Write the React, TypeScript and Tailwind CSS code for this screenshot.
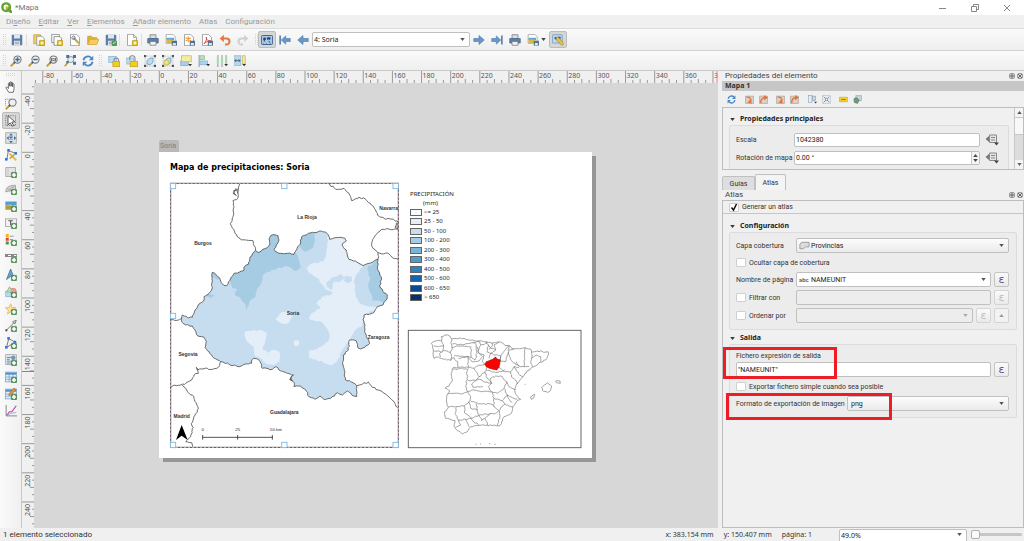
import React, { useState } from 'react';
import type { ReactNode } from 'react';

type Pt = [number, number];

/* ---------- geometry helpers ---------- */

const parse = (s: string): Pt[] =>
  s.trim().split(/\s+/).map((p) => p.split(',').map(Number) as Pt);

const noise = (n: number) => {
  const v = Math.sin(n * 127.1 + 11.7) * 43758.5453;
  return (v - Math.floor(v)) * 2 - 1;
};

/** Turns a coarse polyline into a slightly ragged border. */
function border(s: string, amp = 2.2, step = 6, close = false): string {
  const pts = parse(s);
  if (close) pts.push(pts[0]);
  const out: Pt[] = [pts[0]];
  for (let i = 1; i < pts.length; i++) {
    const [ax, ay] = pts[i - 1];
    const [bx, by] = pts[i];
    const len = Math.hypot(bx - ax, by - ay);
    const n = Math.max(1, Math.round(len / step));
    for (let k = 1; k <= n; k++) {
      const t = k / n;
      const x = ax + (bx - ax) * t;
      const y = ay + (by - ay) * t;
      const a = k === n ? 0 : amp;
      out.push([x + noise(x * 3 + y) * a, y + noise(y * 5 - x) * a]);
    }
  }
  return 'M' + out.map(([x, y]) => x.toFixed(1) + ' ' + y.toFixed(1)).join('L') + (close ? 'Z' : '');
}

/* ---------- icons ---------- */

const floppy = (
  <>
    <path d="M1 1h13l1 1v13H1z" fill="#5b7ea8" />
    <path d="M4 1h8v5H4z" fill="#dfe6ee" />
    <path d="M4 9h8v6H4z" fill="#e9e9e9" />
    <path d="M5 11h6M5 13h6" stroke="#8a8a8a" />
  </>
);
const sheetShape = <path d="M2 .5h8l4 4v11H2z" fill="#fff" stroke="#8b8b8b" />;
const star = (
  <g>
    <rect x="8.5" y="8.5" width="7" height="7" rx="1" fill="#e7c21c" stroke="#b8940a" />
    <path d="M12 10v4M10 12h4" stroke="#fff" strokeWidth="1.4" />
  </g>
);
const plus = (
  <g>
    <rect x="8.5" y="8.5" width="7" height="7" rx="1" fill="#5d9a62" stroke="#4a8450" />
    <path d="M12 9.4v5.200M9.400 12h5.200" stroke="#fff" strokeWidth="2" />
  </g>
);
const glass = (
  <>
    <circle cx="10" cy="6" r="4.8" fill="#eef1f4" stroke="#777" strokeWidth="1.4" />
    <path d="M6.4 9.6L1 15" stroke="#c7a21c" strokeWidth="2.6" />
    <path d="M6.8 9.2L5 11" stroke="#555" strokeWidth="2" />
  </>
);
const printerShape = (
  <>
    <path d="M4 1h8v5H4z" fill="#d9dde2" stroke="#777" />
    <path d="M1 6h14v6H1z" fill="#5c7fa6" stroke="#48678a" />
    <path d="M4 10h8v5H4z" fill="#f2f2f2" stroke="#777" />
  </>
);
const smallDisk = (
  <g>
    <rect x="9" y="9" width="7" height="6.5" fill="#53728f" />
    <rect x="10.5" y="12" width="4" height="3" fill="#dfe6ee" />
  </g>
);
const arrowBlue = (d: string) => <path d={d} fill="#6a96c8" stroke="#4a78aa" strokeWidth=".8" />;
const drop = <path d="M11 12h5l-2.500 3z" fill="#333" />;
const nodeRects = (
  <>
    <path d="M4 12V7l4-3 4 0v6l-4 3z" fill="#bcdcf0" stroke="#5a9bc4" />
    <g fill="#555">
      <rect x="0" y="0" width="3" height="3" /><rect x="13" y="0" width="3" height="3" />
      <rect x="0" y="13" width="3" height="3" /><rect x="13" y="13" width="3" height="3" />
    </g>
    <path d="M4 1.500h8M4 14.500h8M1.500 4v8M14.500 4v8" stroke="#999" strokeWidth=".8" strokeDasharray="1.500 1.500" />
  </>
);
const refreshShape = (
  <>
    <path d="M2 7a6 6 0 0 1 10.500-3" fill="none" stroke="#4b86c6" strokeWidth="2.4" />
    <path d="M15 1v6H9z" fill="#4b86c6" />
    <path d="M14 9a6 6 0 0 1-10.500 3" fill="none" stroke="#4b86c6" strokeWidth="2.4" />
    <path d="M1 15V9h6z" fill="#4b86c6" />
  </>
);
const curl = (flip: boolean, bg: string) => (
  <>
    <path d="M1 2h14v13H1z" fill="#d8d2ca" stroke="#9b948b" />
    <path d={bg} fill="none" stroke="#e8743b" strokeWidth="2.600" />
    <path d={flip ? 'M9 0l7 4.500-7 5z' : 'M12 15L4 13.500l7-7z'} fill="#e8743b" />
  </>
);

const ICONS: Record<string, ReactNode> = {
  save: floppy,
  newLayout: <><path d="M1 1h9v12H1z" fill="#f0cf63" stroke="#c19f2c" /><path d="M5 3h7l3 3v9H5z" fill="#fff" stroke="#888" />{star}</>,
  duplicate: <><path d="M1 .5h10v11H1z" fill="#fff" stroke="#777" /><path d="M4 3.500h8l2 2V15H4z" fill="#fff" stroke="#777" />{star}</>,
  manager: <>{sheetShape}<path d="M6 5l8 8" stroke="#9a9a9a" strokeWidth="2.400" /><path d="M9 9l5 5" stroke="#e0bd3a" strokeWidth="2.200" /><circle cx="6" cy="5" r="2.200" fill="none" stroke="#777" strokeWidth="1.300" /></>,
  open: <><path d="M1 14V3h5l1.500 2H13v2" fill="#e3b433" stroke="#c2952a" /><path d="M1 14L4 7h12l-3 7z" fill="#f7cd55" stroke="#cfa23a" /></>,
  saveTemplate: <>{floppy}<rect x="9" y="9" width="7" height="7" rx="1" fill="#4d9a55" /><path d="M10.500 13l4-2.500" stroke="#fff" /></>,
  addPage: <>{sheetShape}<path d="M10 .5v4h4" fill="none" stroke="#8b8b8b" />{star}</>,
  print: printerShape,
  exportImage: <><path d="M1.500.5h9l3 3v9h-12z" fill="#fff" stroke="#999" /><path d="M2 5h10v3H2z" fill="#61a9d8" /><path d="M2 8l4-1 6 2v3H2z" fill="#d9b944" />{smallDisk}</>,
  exportSvg: <>{sheetShape}<path d="M7 3v8M3.500 5l7 4M10.500 5l-7 4" stroke="#f0993a" strokeWidth="1.500" />{smallDisk}</>,
  exportPdf: <>{sheetShape}<path d="M4 13c3-3 4-7 3-9 0 4 3 6 6 5-3 0-6 1-9 4z" fill="none" stroke="#d2462f" strokeWidth="1.200" />{smallDisk}</>,
  undo: <><path d="M4 6h6a3.500 3.500 0 0 1 0 8H8" fill="none" stroke="#e27a43" strokeWidth="2.800" /><path d="M6.500 1v10L1 6z" fill="#e27a43" /></>,
  redo: <><path d="M12 6H6a3.500 3.500 0 0 0 0 8h2" fill="none" stroke="#d0d0d0" strokeWidth="2.800" /><path d="M9.500 1v10L15 6z" fill="#d0d0d0" /></>,
  atlas: <><rect x=".5" y="2" width="15" height="12" rx="1.500" fill="#a9c8e6" stroke="#315a88" strokeWidth="1.200" /><path d="M3 5l3-.5 1 2-2 2 .5 2.500L3 8zM8 5l2-1 3 1-1 3-2-1-2 1zM10 9l2 1-1 2z" fill="#23486f" /><path d="M3 12.500h1M7 12.500h1M12 12.500h1" stroke="#315a88" /></>,
  first: <><path d="M1.500 2v12" stroke="#4775a6" strokeWidth="2" />{arrowBlue('M3 8l6-5.500V6h6v4H9v3.500z')}</>,
  prev: arrowBlue('M1 8l7-6v4h7v4H8v4z'),
  next: arrowBlue('M15 8L8 2v4H1v4h7v4z'),
  last: <><path d="M14.500 2v12" stroke="#4775a6" strokeWidth="2" />{arrowBlue('M13 8L7 2.500V6H1v4h6v3.500z')}</>,
  atlasSettings: <><rect x=".5" y="1" width="13" height="11" rx="1" fill="#c4d9ea" stroke="#6a94b8" /><path d="M3 4l3 0 0 2-2 2zM8 3l4 1-1 3-2-1z" fill="#3f6a93" /><path d="M6 4l3 1 7 8-2.500 2.500L6 8z" fill="#e3c449" stroke="#8f7b28" strokeWidth=".8" /></>,
  zoomIn: <>{glass}<path d="M10 3v6M7 6h6" stroke="#2f6cae" strokeWidth="2" /></>,
  zoomOut: <>{glass}<path d="M7 6h6" stroke="#2f6cae" strokeWidth="2" /></>,
  zoomActual: <>{glass}<path d="M7.800 4v4.500M12.200 4v4.500" stroke="#333" strokeWidth="1.400" /><path d="M10 4.500v1M10 7v1" stroke="#333" strokeWidth="1.200" /></>,
  zoomFull: <><circle cx="9" cy="6" r="4" fill="#e4edf4" stroke="#777" /><path d="M6 9l-5 6" stroke="#c7a21c" strokeWidth="2.400" /><path d="M3 0h4v4H3zM12 0h4v4h-4zM12 9h4v4h-4zM3 8h3v3H3z" fill="#3f75ad" /></>,
  refresh: refreshShape,
  lock: <><rect x="1" y="2" width="10" height="8" fill="#bcdcf0" stroke="#8bb3d0" /><path d="M8 9V7a3 3 0 0 1 6 0v2" fill="none" stroke="#888" strokeWidth="1.400" /><rect x="6.500" y="8.500" width="9" height="7" fill="#f2cd22" stroke="#c9a40d" /></>,
  unlock: <><rect x="1" y="4" width="9" height="8" fill="#bcdcf0" stroke="#8bb3d0" /><path d="M5 7V5a3.500 3.500 0 0 1 7-1v4" fill="none" stroke="#888" strokeWidth="1.400" /><rect x="5.500" y="8.500" width="10" height="7" fill="#f2cd22" stroke="#c9a40d" /></>,
  group: nodeRects,
  ungroup: <>{nodeRects}<circle cx="6" cy="10" r="3.500" fill="#efe27a" stroke="#c1b03f" /></>,
  raise: <><rect x="1" y="8" width="10" height="6" fill="#a6cfec" stroke="#7aa8c9" /><rect x="2" y="1" width="13" height="8" fill="#f4eda0" stroke="#c4b961" />{drop}</>,
  align: <><path d="M1.500 0v16" stroke="#777" /><rect x="2.500" y="1" width="6" height="5" fill="#b9e2bb" stroke="#8dbf90" /><rect x="2.500" y="8" width="10" height="5" fill="#a8d4ef" stroke="#7fb0d0" />{drop}</>,
  distribute: <><path d="M2.500 0v16M8 0v16M13.500 0v12" stroke="#777" /><rect x="1" y="3" width="3" height="7" fill="#a7dcae" /><rect x="6.500" y="5" width="3" height="7" fill="#a7dcae" /><rect x="12" y="2" width="3" height="8" fill="#a7dcae" />{drop}</>,
  resize: <><rect x="0" y="1" width="9" height="13" fill="#b5d9f1" stroke="#8bb8d6" /><path d="M1 7.500h7M3 5.500l-2 2 2 2M6 5.500l2 2-2 2" stroke="#444" fill="none" /><rect x="11" y="1" width="4" height="11" fill="#f1e9a0" stroke="#c4b961" />{drop}</>,
  hand: <path d="M5 15L1.500 9.500C.8 8 2.300 7.500 3 8.500L4.500 10V3.500c0-1.300 1.800-1.300 1.800 0V7 2c0-1.300 1.900-1.300 1.900 0v5-4.400c0-1.300 1.900-1.300 1.900 0V7.500 4.500c0-1.200 1.900-1.200 1.900 0V10c0 2-.5 3-1 5z" fill="#fff" stroke="#444" />,
  zoomTool: <><path d="M.5 1.500h8M.5 1.500v9" stroke="#777" strokeDasharray="1.500 1" />{glass}</>,
  select: <><rect x="1" y="1" width="13" height="13" fill="#d9d9d9" stroke="#555" strokeDasharray="1.500 1.500" /><path d="M4 1l9 8-4 .5 2.500 4.500-2 1L7 10.500 4 13z" fill="#fff" stroke="#333" /></>,
  moveContent: <><rect x="1" y="1" width="14" height="14" fill="#dfe3e6" stroke="#999" /><path d="M8 1.500l2.500 3h-5zM8 15l2.500-3h-5zM2 8l3-2.500v5zM15 8l-3-2.500v5z" fill="#3c6c9c" /><path d="M6 6l4 4M10 6l-4 4" stroke="#3c6c9c" strokeWidth="1.600" /></>,
  editNodes: <><path d="M2.500 14L4.500 2l10 4" fill="none" stroke="#555" /><path d="M15 15L6 6" stroke="#e8bb3a" strokeWidth="2.600" /><path d="M6 13l7-6" stroke="#d09a2a" strokeWidth="1.800" /><g fill="#2f7be0"><rect x="3" y="0" width="3.500" height="3.500" /><rect x="12.500" y="4" width="3.500" height="3.500" /><rect x="0" y="12" width="3.500" height="3.500" /></g></>,
  addMap: <><path d="M1 2h13v12H1z" fill="#e4e4e4" stroke="#999" /><path d="M4 2v12" stroke="#bbb" />{plus}</>,
  add3d: <><path d="M1 12c0-6 4-9 13-9v9c-4-2-8-2-13 0z" fill="#d0d0d0" stroke="#999" /><path d="M5 11c1-4 4-6 9-6M3 8l9 2" stroke="#aaa" fill="none" />{plus}</>,
  addPicture: <><rect x=".5" y="2" width="15" height="5" fill="#4f9fd6" /><path d="M.5 7h15v6H.5z" fill="#b39a3e" /><path d="M.5 7l7-1 8 3V7z" fill="#e6d27c" />{plus}</>,
  addLabel: <><rect x=".5" y="2.500" width="15" height="10" fill="#f2f2f2" stroke="#999" /><path d="M4.500 5h6M7.500 5v6" stroke="#555" strokeWidth="1.400" />{plus}</>,
  addLegend: <><rect x="1" y="0" width="4" height="4" fill="#f2b52a" /><rect x="1" y="5" width="4" height="4" fill="#dc4a2a" /><rect x="1" y="10" width="4" height="4" fill="#3e9b4a" /><path d="M6.500 3h5M6.500 7.500h4M6.500 12h2" stroke="#999" strokeWidth="1.400" />{plus}</>,
  addScale: <><rect x="0" y="4" width="16" height="4" fill="#888" /><path d="M4 6h4M12 6h3" stroke="#fff" strokeWidth="1.500" />{plus}</>,
  addNorth: <><path d="M7.500 0L13 14l-5.500-4L2 14z" fill="#6aa0d0" stroke="#3f6d98" />{plus}</>,
  addShape: <><rect x="1" y="7" width="9" height="7" fill="#b8daf0" stroke="#86b2d1" /><circle cx="11" cy="7" r="4" fill="#f0a0a0" stroke="#cf7070" /><path d="M6 1l4 7H2z" fill="#b7e3b5" stroke="#7cb97a" />{plus}</>,
  addMarker: <><path d="M7.500 1l2 5 5 .3-4 3.400 1.300 5-4.300-2.900-4.300 2.900 1.300-5-4-3.400 5-.3z" fill="#fbe39a" stroke="#e2b34c" />{plus}</>,
  addArrow: <><path d="M1.500 14L13 2.500" stroke="#555" /><circle cx="1.800" cy="13.800" r="1.500" fill="#444" /><path d="M10 2.500L15 0l-1.500 5z" fill="#ddd" stroke="#666" />{plus}</>,
  addNode: <><path d="M2 14L5 2l8.500 5z" fill="#f0f0f0" stroke="#555" /><g fill="#2f7be0"><rect x="3" y="0" width="3.500" height="3.500" /><rect x="11.500" y="5" width="3.500" height="3.500" /><rect x="0" y="12" width="3.500" height="3.500" /></g>{plus}</>,
  addHtml: <><rect x="1" y="1" width="14" height="13" fill="#eaf0f5" stroke="#8b9aa8" /><path d="M2.500 4.500h6M2.500 7h4M2.500 9.500h5M2.500 12h5" stroke="#5f87ae" strokeWidth="1.300" /><circle cx="11" cy="5" r="3" fill="#7a93ab" />{plus}</>,
  addTable: <><rect x=".5" y="1.500" width="15" height="13" fill="#e3effa" stroke="#7aa2c8" /><path d="M1 2h14v3H1z" fill="#5b8fc4" /><path d="M1 8h14M1 11h14M5.500 5v9M10.500 5v9" stroke="#7aa2c8" />{plus}</>,
  addAttr: <><rect x=".5" y="1.500" width="15" height="13" fill="#e3effa" stroke="#7aa2c8" /><path d="M1 2h14v3H1z" fill="#5b8fc4" /><path d="M1 8h14M1 11h14" stroke="#7aa2c8" /><path d="M5 10l1-3 6-7 2.500 2-6 7z" fill="#e39a3c" stroke="#8a5a20" strokeWidth=".7" />{plus}</>,
  addPlot: <><path d="M1.500 0v14.500H16" stroke="#666" fill="none" /><path d="M2 14L6 9h3l6-8" stroke="#c03ba6" strokeWidth="1.500" fill="none" /><path d="M2 14l6-3 7-1" stroke="#7aa2d8" fill="none" /></>,
  curl1: curl(false, 'M3 4c5-1 8 2 7 7'),
  curl2: curl(true, 'M3 14c0-6 3-9 8-9.500'),
  bookmark: <><rect x="1" y="1" width="6" height="12" fill="#e8eef3" stroke="#8a9aa8" /><rect x="8" y="2" width="5" height="8" fill="#c9d8e4" stroke="#7f95a8" />{drop}</>,
  extent: <><rect x="1" y="1" width="14" height="14" fill="#e9edf0" stroke="#999" strokeDasharray="2 1" /><path d="M3 3l10 10M13 3L3 13" stroke="#6b8fb2" strokeWidth="1.600" /><circle cx="8" cy="8" r="2" fill="#fff" stroke="#3c6c9c" /></>,
  labels: <><rect x="0" y="4" width="16" height="8" rx="2" fill="#f2cf2a" stroke="#c7a41a" /><path d="M4 8h8" stroke="#665" strokeWidth="1.400" /></>,
  clip: <><path d="M5 1h10v9H5z" fill="#c5d5dc" stroke="#8b9ea8" /><path d="M2 6l5-1 4 4-3 6-6-2z" fill="#6f9c7c" stroke="#4b6f57" /></>,
};

const Glyph = ({ name, className = 'h-3 w-3' }: { name: string; className?: string }) => (
  <svg viewBox="0 0 16 16" className={className} aria-hidden="true">{ICONS[name]}</svg>
);

function ToolButton({ name, label, active = false }: { name: string; label: string; active?: boolean }) {
  return (
    <button
      type="button"
      aria-label={label}
      className={
        'flex h-[17px] w-[18px] shrink-0 items-center justify-center rounded-xs ' +
        (active ? 'border border-[#bcbcbc] bg-[#d6d6d6]' : '')
      }
    >
      <Glyph name={name} className="h-3 w-3 shrink-0" />
    </button>
  );
}

const Tools = ({ items, className }: { items: [string, string, boolean?][]; className: string }) => (
  <div className={'flex shrink-0 items-center justify-between ' + className}>
    {items.map(([name, label, active]) => (
      <ToolButton key={label} name={name} label={label} active={active} />
    ))}
  </div>
);

const Handle = ({ className = '' }: { className?: string }) => (
  <span className={'h-[11px] w-[3px] shrink-0 border-x border-dotted border-[#d4d4d4] ' + className} />
);
const Sep = ({ className = '' }: { className?: string }) => (
  <span className={'h-[12px] w-px shrink-0 bg-[#dedede] ' + className} />
);

const Caret = ({ className = 'text-[#666]', up = false }: { className?: string; up?: boolean }) => (
  <svg viewBox="0 0 6 4" className={'h-[3px] w-[5px] shrink-0 ' + className} aria-hidden="true">
    <path d={up ? 'M0 4h6L3 0z' : 'M0 0h6L3 4z'} fill="currentColor" />
  </svg>
);

/* ---------- rulers ---------- */

const STEP = 29.14;
const range = (from: number, to: number) => Array.from({ length: to - from + 1 }, (_, i) => from + i);
const minor = [1, 2, 3];

function TopRuler() {
  return (
    <div className="relative h-3 min-w-0 flex-1 overflow-hidden bg-[#f0f0f0]">
      <svg className="absolute inset-0 h-full w-full text-[7px]" aria-label="Regla horizontal">
        {range(-5, 19).map((t) => {
          const x = 125.3 + t * STEP;
          return (
            <g key={t} stroke="#999">
              <path d={`M${x} 0v12`} />
              {minor.map((m) => <path key={m} d={`M${x + (STEP * m) / 4} ${m === 2 ? 8 : 9}v4`} />)}
              {t > -5 && <text x={x + 1} y="7" fill="#555" stroke="none">{t === 19 ? '3' : t * 20}</text>}
            </g>
          );
        })}
        <path d="M683 0v12" stroke="#e88" />
      </svg>
    </div>
  );
}

function SideRuler() {
  return (
    <div className="relative w-[13px] shrink-0 overflow-hidden border-l border-[#c9c9c9] bg-[#f0f0f0]">
      <svg className="absolute inset-0 h-full w-full text-[7px]" aria-label="Regla vertical">
        {range(-3, 12).map((t) => {
          const y = 69.3 + t * STEP;
          return (
            <g key={t} stroke="#999">
              <path d={`M0 ${y}h13`} />
              {minor.map((m) => <path key={m} d={`M${m === 2 ? 8 : 10} ${y + (STEP * m) / 4}h5`} />)}
              {t > -3 && (
                <text transform={`translate(8 ${y + 2}) rotate(-90)`} textAnchor="end" fill="#555" stroke="none">{t * 20}</text>
              )}
            </g>
          );
        })}
        <path d="M0 288.500h13" stroke="#e55" />
      </svg>
    </div>
  );
}

/* ---------- map drawings ---------- */

const SORIA =
  '160,397 172,405 183,415 187,428 198,437 207,432 215,415 225,400 240,397 252,393 258,378 268,373 272,358 280,342 290,332 300,337 312,328 328,320 333,312 330,297 335,287 345,284 357,287 360,300 352,315 345,328 350,335 365,340 385,340 405,343 412,330 420,317 425,305 428,290 445,283 460,277 485,273 500,276 508,285 512,298 525,294 545,292 557,294 562,303 550,312 553,322 562,330 565,345 570,358 590,363 612,377 630,370 650,360 657,357 655,385 662,405 668,418 662,437 672,455 685,465 682,480 672,495 655,500 640,520 615,525 612,540 618,555 617,575 625,595 632,610 605,627 595,618 592,603 572,600 568,630 553,645 552,675 560,720 575,725 593,737 593,770 585,768 565,753 550,765 535,758 515,775 495,778 483,768 468,778 450,770 440,750 425,738 405,740 403,725 392,718 403,705 385,700 360,690 350,680 340,688 310,685 303,665 292,656 280,658 278,670 255,673 237,680 210,673 185,665 160,650 138,622 142,605 135,592 115,587 108,570 100,558 80,555 68,545 70,525 85,532 100,532 108,510 120,492 135,480 135,470 150,460 158,450 158,430';

const LIGHT = [
  '508,275 570,290 570,355 612,377 595,400 585,430 590,470 605,492 640,500 660,505 615,525 607,560 590,570 570,600 550,630 540,655 520,675 505,672 490,665 450,655 450,632 480,622 500,608 512,595 508,570 490,547 450,537 455,522 485,505 472,490 488,470 522,460 500,450 480,418 450,400 443,385 460,370 495,365 500,340 505,320',
  '350,540 365,520 385,512 400,530 392,547 375,552',
  '255,575 285,570 325,575 320,600 310,622 325,637 350,630 364,642 362,665 345,675 318,668 303,655 288,648 285,620 262,602',
  '404,604 412,600 421,606 418,617 408,619',
];
const MID = [
  '502,428 520,412 545,403 556,412 544,424 522,428 520,448 505,442',
  '556,410 578,408 580,422 566,430 554,422',
];
const DARK = [
  '210,412 240,385 280,320 320,280 370,280 360,330 405,335 415,345 424,385 408,393 390,380 360,382 345,390 325,395 310,410 305,432 295,445 290,470 275,480 265,508 255,488 240,470 228,465 236,450 222,445 215,430',
  '150,390 176,400 184,414 176,420 162,412',
  '420,290 468,276 468,300 460,325 440,335 422,320',
  '660,350 625,385 632,410 628,440 638,462 640,482 700,488 700,400',
  '145,462 166,466 160,472 140,470',
];
const BORDERS = [
  '242,130 238,150 236,175 222,182 225,200 222,230 214,250 228,280 247,300 282,302 290,332',
  '236,148 224,152 232,166 222,160 230,146 237,160',
  '507,130 530,148 555,145 572,165 578,182 600,172 620,178 637,195 650,210 655,225 675,235 695,237 715,243 716,268 690,267 665,270 650,285 638,310 642,325 657,338 690,342 703,355 718,358',
  '657,338 657,357',
  '712,248 708,262 716,268',
  '35,540 55,541 68,535',
  '185,665 178,682 160,688 145,685 115,690 112,682 118,700 105,705 98,720 80,730 65,735 45,735 35,742',
  '70,735 85,755 105,770 108,785 118,805 105,830 97,850 103,862 95,890 85,900 80,905 98,908 101,920',
  '593,737 610,732 628,726 640,742 670,755 700,780 716,802',
  '403,705 395,712 400,722 392,718',
];

const SPAIN =
  '97,490 110,483 128,480 127,470 138,465 152,468 158,477 195,475 220,480 240,483 262,487 285,488 300,486 312,490 318,497 330,497 345,507 370,505 378,503 395,507 398,516 420,515 447,515 449,522 440,540 420,548 405,560 385,572 372,590 355,610 348,625 352,645 365,658 350,668 342,680 337,700 315,710 303,737 285,735 240,736 215,740 205,755 190,762 175,752 166,740 168,722 140,715 137,695 148,682 142,660 146,642 152,632 138,624 150,618 160,600 158,590 160,565 178,562 176,545 165,533 155,541 140,537 118,531 105,535 103,510';
const PROVINCES = [
  '128,480 134,498 132,512 122,520 124,532', '104,498 118,500 134,498', '104,513 120,512 128,516',
  '158,477 156,490 160,506 154,516 132,512', '154,516 158,530 155,541', '160,492 190,494 222,488 240,483',
  '158,502 180,498 214,500', '165,528 190,528 216,532', '216,500 216,532 228,540 234,520 232,494 222,488',
  '178,535 206,530 208,562 178,562', '206,530 220,545 240,543 250,530 240,520 234,500',
  '240,483 246,494 264,490 262,483', '246,494 238,510 240,520 256,525 250,545 257,553',
  '268,494 264,515 275,520 270,535', '264,490 275,505 290,510 285,495 300,486',
  '280,488 278,500 270,508', '290,510 275,520 288,525 305,528 303,540', '305,528 315,515 330,497',
  '305,528 304,545 320,545 328,515', '330,497 327,520 340,545 360,558 375,560 378,503', '345,507 330,510',
  '398,516 400,525 395,545 400,560', '360,558 352,545', '398,535 412,525 425,530 425,545', '375,560 390,560',
  '300,562 315,573 335,575 345,560 360,562', '345,560 362,585 372,590', '335,575 338,592 350,600 355,612',
  '257,553 240,555 225,565 208,562', '208,565 203,580 206,600 230,602 240,590 232,575 225,565',
  '162,568 185,565 205,568', '230,602 218,612 222,622 252,620', '240,590 258,575 262,562',
  '258,575 262,590 278,610 255,605 242,598 230,602', '262,570 290,578 305,575', '305,575 318,568',
  '278,610 275,595 290,588 310,590 323,605 315,625 295,640 278,635 268,620 278,610',
  '323,605 330,620 350,628', '315,625 325,645 345,655 355,658', '203,600 200,620 206,635 185,642 165,640 146,642',
  '206,635 225,630 250,635 278,635', '206,635 215,650 210,665 195,678 170,680 148,680',
  '215,662 240,672 275,672', '278,635 285,655 285,680 275,672', '285,655 310,662 325,645',
  '310,662 318,672 330,678 342,680', '210,665 215,685 235,690 232,672', '285,680 300,692 290,700 275,700 240,706 235,690',
  '300,692 310,680 318,672', '172,682 168,700 178,720 200,718 225,712 240,706', '195,678 198,700 215,712',
  '178,720 185,735 170,742', '200,718 210,740', '215,712 222,722 240,736', '240,706 248,722 258,715 275,700',
  '258,715 265,735', '300,692 303,715 295,737', '325,645 332,660 340,668',
];
const BALEARES = ['428,622 445,608 458,618 455,630 445,637 430,630', '470,603 483,603 484,610 472,608', '395,650 407,643 403,655 397,658'];

const HANDLES: Pt[] = [
  [34, 130], [368, 130], [702, 130], [34, 520], [702, 520], [34, 907], [368, 907], [702, 907],
];

function MapLabel({ x, y, children }: { x: number; y: number; children: string }) {
  return (
    <text x={x} y={y} textAnchor="middle" fontSize="15" fontWeight="700" fill="#333" fontFamily='"Liberation Sans", sans-serif'>
      {children}
    </text>
  );
}

function MapDrawing() {
  const soria = border(SORIA, 2.2, 6, true);
  return (
    <svg viewBox="0 36 1299 918" className="absolute inset-0 h-full w-full" aria-label="Mapa de Soria">
      <clipPath id="soria"><path d={soria} /></clipPath>
      <g clipPath="url(#soria)">
        <path d={soria} fill="#c6dcef" />
        {LIGHT.map((s) => <path key={s} d={border(s, 3, 7, true)} fill="#e3eef9" />)}
        {MID.map((s) => <path key={s} d={border(s, 3, 6, true)} fill="#c6dcef" />)}
        {DARK.map((s) => <path key={s} d={border(s, 3, 7, true)} fill="#a5cce3" />)}
      </g>
      <g fill="none" stroke="#555" strokeWidth="2.6">
        <path d={soria} />
        {BORDERS.map((s) => <path key={s} d={border(s)} />)}
      </g>
      <rect x="35" y="130" width="683" height="792" fill="none" stroke="#444" strokeWidth="3" />
      <rect x="35" y="130" width="683" height="792" fill="none" stroke="#d9b3c6" strokeWidth="3" strokeDasharray="6 6" />
      <MapLabel x={444} y={238}>La Rioja</MapLabel>
      <MapLabel x={689} y={210}>Navarra</MapLabel>
      <MapLabel x={132} y={315}>Burgos</MapLabel>
      <MapLabel x={402} y={524}>Soria</MapLabel>
      <MapLabel x={659} y={596}>Zaragoza</MapLabel>
      <MapLabel x={87} y={647}>Segovia</MapLabel>
      <MapLabel x={376} y={823}>Guadalajara</MapLabel>
      <MapLabel x={68} y={834}>Madrid</MapLabel>
      <path d="M68 855L86 900 68 887 51 900z" fill="#000" />
      <path d="M130 892h211M131 885v14M236 885v14M340 885v14" stroke="#333" strokeWidth="2.500" fill="none" />
      <g fontSize="13" fill="#222" textAnchor="middle" fontFamily='"Liberation Sans", sans-serif'>
        <text x="131" y="873">0</text>
        <text x="236" y="873">25</text>
        <text x="351" y="873">50 km</text>
      </g>
      {HANDLES.map(([x, y]) => (
        <rect key={x + '-' + y} x={x} y={y} width="16" height="16" fill="#fff" stroke="#7ab6e2" strokeWidth="2.600" />
      ))}
      <g transform="translate(720 120)" fill="none" stroke="#777" strokeWidth="2">
        <rect x="28" y="451" width="518" height="352" stroke="#666" strokeWidth="3" />
        <path d={border(SPAIN, 2.4, 6, true)} />
        {PROVINCES.map((s) => <path key={s} d={border(s, 1.8, 5)} />)}
        {BALEARES.map((s) => <path key={s} d={border(s, 1.8, 5, true)} />)}
        <path d="M229 793h3M243 792h3M270 790l4 1M286 793h4M377 613h3" />
        <path d={border('257,552 262,545 275,540 285,535 290,531 295,537 304,540 302,553 300,562 293,570 283,568 272,565 262,560', 1, 5, true)} fill="#f00" stroke="#900" />
      </g>
    </svg>
  );
}

const LEGEND: [string, string][] = [
  ['<= 25', 'bg-[#f7fbff]'],
  ['25 - 50', 'bg-[#e3eef9]'],
  ['50 - 100', 'bg-[#c6dcef]'],
  ['100 - 200', 'bg-[#a5cce3]'],
  ['200 - 300', 'bg-[#79b5d9]'],
  ['300 - 400', 'bg-[#539dcc]'],
  ['400 - 500', 'bg-[#3282be]'],
  ['500 - 600', 'bg-[#1764ab]'],
  ['600 - 650', 'bg-[#0a4a90]'],
  ['> 650', 'bg-[#08306b]'],
];

function LayoutPage() {
  return (
    <>
      <div className="absolute top-[57px] left-[125px] flex h-3 w-5 items-center rounded-t-xs bg-[#b9b9b9] pl-px font-['Roboto'] text-[7px] text-[#808080]">
        Soria
      </div>
      <div className="absolute top-[69px] left-[125px] h-[306px] w-[433px] bg-white shadow-[4px_4px_0_#969696]">
        <MapDrawing />
        <h1 className="absolute top-[10px] left-[11px] font-['DejaVu_Sans'] text-[8px] leading-[12px] font-bold whitespace-nowrap text-black">
          Mapa de precipitaciones: Soria
        </h1>
        <div className="absolute top-[38px] left-[251px] font-['Noto_Sans'] text-[6px] leading-[9px] whitespace-nowrap text-[#222]">
          <div>PRECIPITACIÓN</div>
          <div className="pl-[13px]">(mm)</div>
          <ul className="flex h-[94px] flex-col justify-between">
            {LEGEND.map(([label, color]) => (
              <li key={label} className="flex h-[9px] items-center gap-[2px]">
                <span className={'h-[7px] w-[12px] border border-[#666] ' + color} />
                {label}
              </li>
            ))}
          </ul>
        </div>
      </div>
    </>
  );
}

/* ---------- dock widgets ---------- */

const DockTitle = ({ children }: { children: string }) => (
  <div className="flex h-[10px] items-center justify-between pr-px pl-[3px] font-['Roboto'] text-[8px] text-[#444]">
    <span>{children}</span>
    <span className="flex gap-[2px]">
      {['Flotar', 'Cerrar'].map((l) => (
        <button key={l} type="button" aria-label={l} className="flex h-[6px] w-[6px] items-center justify-center rounded-xs border border-[#999] bg-[#ddd]">
          <svg viewBox="0 0 4 4" className="h-1 w-1 shrink-0"><path d={l === 'Cerrar' ? 'M0 0l4 4M4 0L0 4' : 'M1 1h2v2H1z'} stroke="#666" fill="none" /></svg>
        </button>
      ))}
    </span>
  </div>
);

const Section = ({ title, children, className = '' }: { title: string; children: ReactNode; className?: string }) => (
  <section>
    <h2 className="flex h-3 items-center gap-[5px] font-['Noto_Sans'] text-[7px] font-bold text-[#222]">
      <Caret className="text-[#333]" />
      {title}
    </h2>
    <div className={'-ml-px flex flex-col rounded-xs border border-[#dcdcdc] bg-[#ececec] pl-[6px] ' + className}>{children}</div>
  </section>
);

const fieldBase = 'min-w-0 rounded-xs border border-[#c0c0c0] px-px text-[#222] disabled:bg-[#ededed]';

function Select({ id, value, bg = 'bg-linear-to-b from-[#fdfdfd] to-[#eaeaea]', pad = 'pl-[3px]', disabled = false, icon, label }: {
  id: string; value: string; bg?: string; pad?: string; disabled?: boolean; icon?: ReactNode; label?: string;
}) {
  return (
    <div className="relative flex min-w-0 flex-1">
      <select id={id} aria-label={label} disabled={disabled} className={`h-[15px] w-full appearance-none rounded-xs border border-[#c0c0c0] text-[#222] ${pad} ${bg}`}>
        <option>{value}</option>
      </select>
      {icon && <span className="pointer-events-none absolute inset-y-0 left-[3px] flex items-center">{icon}</span>}
      <span className="pointer-events-none absolute inset-y-0 right-[5px] flex items-center">
        <Caret className={disabled ? 'text-[#aaa]' : 'text-[#555]'} />
      </span>
    </div>
  );
}

function Check({ id, label, defaultChecked = false, className = '' }: { id: string; label: string; defaultChecked?: boolean; className?: string }) {
  const [on, setOn] = useState(defaultChecked);
  return (
    <label htmlFor={id} className={'flex shrink-0 items-center gap-[3px] ' + className}>
      <span className="relative flex h-[9px] w-[10px] shrink-0">
        <input id={id} type="checkbox" checked={on} onChange={() => setOn(!on)} className="h-full w-full appearance-none rounded-[1px] border border-[#cfcfcf] bg-white" />
        {on && (
          <svg viewBox="0 0 10 9" className="pointer-events-none absolute inset-0 h-full w-full"><path d="M2.500 4.500l2 2.500 3-6" fill="none" stroke="#111" strokeWidth="1.500" /></svg>
        )}
      </span>
      {label}
    </label>
  );
}

const Epsilon = ({ disabled = false, label }: { disabled?: boolean; label: string }) => (
  <button type="button" aria-label={label} disabled={disabled} className="flex h-[15px] w-[15px] shrink-0 items-center justify-center rounded-xs border border-[#c4c4c4] bg-linear-to-b from-[#fafafa] to-[#eaeaea] font-['DejaVu_Sans'] text-[11px] leading-none text-[#6e3d78] disabled:border-[#d4d4d4] disabled:text-[#bbb]">
    ε
  </button>
);

const Override = ({ label }: { label: string }) => (
  <button type="button" aria-label={label} className="ml-[5px] flex w-[14px] shrink-0 items-center justify-center">
    <svg viewBox="0 0 14 12" className="h-3 w-[14px]"><path d="M.5 5l3.500-3v6z" fill="#777" /><path d="M4.500 1h7v7.500h-7z" fill="#e4e4e4" stroke="#888" /><path d="M6 3.500h4M6 6h4" stroke="#888" /><path d="M9 8.500h5l-2.500 3z" fill="#444" /></svg>
  </button>
);

function ItemProperties() {
  return (
    <div>
      <DockTitle>Propiedades del elemento</DockTitle>
      <div className="flex h-[10px] items-center bg-[#c6c6c6] pl-[3px] font-['Noto_Sans'] font-bold text-[#333]">Mapa 1</div>
      <div className="flex h-4 items-center pl-[2px]">
        {[
          ['refresh', 'Actualizar vista', 'mr-1'],
          ['curl1', 'Fijar extensión del mapa', ''],
          ['curl2', 'Ver extensión en el lienzo', 'mr-[3px]'],
          ['curl1', 'Fijar escala', ''],
          ['curl2', 'Ver escala en el lienzo', 'mr-1'],
          ['bookmark', 'Marcadores', ''],
          ['extent', 'Editar extensión', 'mr-[3px]'],
          ['labels', 'Etiquetas', ''],
          ['clip', 'Recorte', ''],
        ].map(([n, l, m]) => (
          <button key={l} type="button" aria-label={l} className={'flex w-[14px] items-center justify-center ' + m}>
            <Glyph name={n} className="h-[9px] w-[9px]" />
          </button>
        ))}
      </div>
      <div className="flex h-[63px] overflow-hidden border border-[#bdbdbd]">
        <div className="min-w-0 flex-1 pt-[5px] pr-[5px] pl-[7px]">
          <Section title="Propiedades principales" className="gap-[4px] pt-[7px] pr-[9px]">
            <div className="flex h-[14px] items-center">
              <label htmlFor="scale" className="w-[58px] shrink-0">Escala</label>
              <input id="scale" defaultValue="1042380" className={fieldBase + ' h-[14px] flex-1 bg-white'} />
              <Override label="Anular escala" />
            </div>
            <div className="flex h-[14px] items-center">
              <label htmlFor="rotation" className="w-[58px] shrink-0 whitespace-nowrap">Rotación de mapa</label>
              <div className="relative flex min-w-0 flex-1">
                <input id="rotation" defaultValue="0.00 °" className={fieldBase + ' h-[14px] w-full bg-white'} />
                <span className="absolute inset-y-px right-px flex w-2 flex-col items-center justify-center gap-[2px] border-l border-[#c8c8c8] bg-[#f4f4f4]">
                  <Caret up className="text-[#444]" />
                  <Caret className="text-[#444]" />
                </span>
              </div>
              <Override label="Anular rotación" />
            </div>
            <div className="flex gap-[2px] pr-[19px] pl-[58px]">
              <span className="h-[14px] flex-1 rounded-xs border border-[#c0c0c0] bg-[#e4e4e4]" />
              <span className="h-[14px] w-[14px] rounded-xs border border-[#c0c0c0] bg-[#ececec]" />
            </div>
          </Section>
        </div>
        <div className="flex w-[9px] shrink-0 flex-col border-l border-[#c8c8c8] bg-[#dcdcdc]">
          <span className="flex h-[9px] items-center justify-center bg-[#f4f4f4]"><Caret up className="text-[#555]" /></span>
          <span className="h-[18px] border-y border-[#c8c8c8] bg-[#f8f8f8]" />
          <span className="mt-auto flex h-[9px] items-center justify-center bg-[#f4f4f4]"><Caret /></span>
        </div>
      </div>
    </div>
  );
}

function AtlasPanel() {
  return (
    <div className="flex flex-1 flex-col">
      <DockTitle>Atlas</DockTitle>
      <div className="flex flex-1 flex-col border border-[#bdbdbd]">
        <Check id="gen" label="Generar un atlas" defaultChecked className="h-[13px] border-b border-[#c6c6c6] pl-[6px]" />
        <div className="flex flex-col gap-[2px] pt-[6px] pr-[6px] pl-[7px]">
          <Section title="Configuración" className="gap-[3px] pt-[5px] pr-[7px] pb-[6px]">
            <div className="flex items-center">
              <label htmlFor="layer" className="w-[60px] shrink-0">Capa cobertura</label>
              <Select id="layer" value="Provincias" pad="pl-[14px]" icon={
                <svg viewBox="0 0 12 9" className="h-[9px] w-[11px]"><path d="M1 3l2-2h8v5H7L5 8H1z" fill="#dcdcdc" stroke="#999" /></svg>
              } />
            </div>
            <Check id="hide" label="Ocultar capa de cobertura" className="h-[13px]" />
            <div className="flex items-center">
              <label htmlFor="pagename" className="w-[60px] shrink-0 whitespace-nowrap">Nombre de página</label>
              <Select id="pagename" value="NAMEUNIT" bg="bg-white" pad="pl-[14px]" icon={<span className="text-[6px] font-bold text-[#666]">abc</span>} />
              <span className="ml-[3px] flex"><Epsilon label="Expresión del nombre" /></span>
            </div>
            <div className="flex items-center">
              <Check id="filter" label="Filtrar con" className="w-[60px]" />
              <input aria-label="Expresión de filtro" disabled className={fieldBase + ' h-[15px] flex-1'} />
              <span className="ml-[3px] flex"><Epsilon disabled label="Expresión de filtro avanzada" /></span>
            </div>
            <div className="flex items-center">
              <Check id="sort" label="Ordenar por" className="w-[60px]" />
              <Select id="sortby" label="Campo de orden" value="" bg="bg-[#ededed]" disabled />
              <span className="ml-[3px] flex gap-[3px]">
                <Epsilon disabled label="Expresión de orden" />
                <button type="button" disabled aria-label="Sentido del orden" className="flex h-[15px] w-[15px] items-center justify-center rounded-xs border border-[#d4d4d4] bg-[#f2f2f2]">
                  <Caret up className="text-[#999]" />
                </button>
              </span>
            </div>
          </Section>
          <Section title="Salida" className="gap-[3px] pt-1 pr-[7px] pb-[6px]">
            <div className="relative flex flex-col">
              <label htmlFor="out" className="flex h-[13px] items-center">Fichero expresión de salida</label>
              <div className="flex items-center gap-[3px]">
                <input id="out" defaultValue={'"NAMEUNIT"'} className={fieldBase + ' h-[15px] flex-1 bg-white'} />
                <Epsilon label="Expresión de salida" />
              </div>
              <span className="pointer-events-none absolute -top-[2px] -left-[13px] h-8 w-[114px] border-3 border-[#ee1c25]" />
            </div>
            <Check id="single" label="Exportar fichero simple cuando sea posible" className="h-[13px]" />
            <div className="relative flex items-center">
              <label htmlFor="format" className="w-[111px] shrink-0 whitespace-nowrap">Formato de exportación de imagen</label>
              <Select id="format" value="png" />
              <span className="pointer-events-none absolute -top-[3px] -left-[10px] h-[27px] w-[166px] border-3 border-[#ee1c25]" />
            </div>
          </Section>
        </div>
      </div>
    </div>
  );
}

/* ---------- window ---------- */

const MENUS = ['Diseño', 'Editar', 'Ver', 'Elementos', 'Añadir elemento', 'Atlas', 'Configuración'];

const TOOLBOX: [string, string, boolean?][] = [
  ['hand', 'Desplazar'], ['zoomTool', 'Zum'], ['select', 'Seleccionar', true], ['moveContent', 'Mover contenido'],
  ['editNodes', 'Editar nodos'], ['addMap', 'Añadir mapa'], ['add3d', 'Añadir mapa 3D'], ['addPicture', 'Añadir imagen'],
  ['addLabel', 'Añadir etiqueta'], ['addLegend', 'Añadir leyenda'], ['addScale', 'Añadir barra de escala'],
  ['addNorth', 'Añadir flecha de norte'], ['addShape', 'Añadir forma'], ['addMarker', 'Añadir marcador'],
  ['addArrow', 'Añadir flecha'], ['addNode', 'Añadir nodo'], ['addHtml', 'Añadir HTML'], ['addTable', 'Añadir tabla fija'],
  ['addAttr', 'Añadir tabla de atributos'], ['addPlot', 'Añadir perfil'],
];

export default function App() {
  return (
    <div className="flex min-h-screen flex-col overflow-hidden bg-[#f0f0f0] font-['Noto_Sans',sans-serif] text-[7px] leading-[10px] text-[#333]">
      <header className="flex h-[15px] shrink-0 items-center bg-white">
        <svg viewBox="0 0 16 16" className="ml-px h-[11px] w-[11px]" aria-hidden="true">
          <circle cx="7.500" cy="7.500" r="5.500" fill="none" stroke="#62a52f" strokeWidth="3.600" />
          <path d="M7 7h4l5 6v3h-3L7 10z" fill="#62a52f" />
          <path d="M7 7h3l1 2-2 1-2-1z" fill="#f0a13a" />
        </svg>
        <span className="ml-[3px] font-['Roboto'] text-[8px] text-[#777]">*Mapa</span>
        <div className="ml-auto flex items-center gap-[24px] pr-[13px] text-[#888]">
          <button type="button" aria-label="Minimizar"><svg viewBox="0 0 8 8" className="h-2 w-2"><path d="M0 4.500h7" stroke="currentColor" /></svg></button>
          <button type="button" aria-label="Restaurar"><svg viewBox="0 0 8 8" className="h-2 w-2"><path d="M.5 2.500h5v5h-5zM2.500 2V.5h5v5H6" fill="none" stroke="currentColor" /></svg></button>
          <button type="button" aria-label="Cerrar ventana"><svg viewBox="0 0 8 8" className="h-2 w-2"><path d="M1 1l6 6M7 1L1 7" stroke="currentColor" /></svg></button>
        </div>
      </header>

      <nav className="flex h-[13px] shrink-0 items-center gap-[8px] pl-[6px] font-['Roboto'] text-[8px] text-[#999]">
        {MENUS.map((m) => (
          <button key={m} type="button" className="whitespace-nowrap">
            {m === 'Atlas' || m === 'Configuración' ? m : m === 'Diseño' ? <>Di<u>s</u>eño</> : <><u>{m[0]}</u>{m.slice(1)}</>}
          </button>
        ))}
      </nav>

      <div className="flex h-[22px] shrink-0 items-center border-t border-[#dcdcdc] bg-linear-to-b from-[#fafafa] to-[#efefef] pl-[3px]">
        <Handle />
        <Tools className="ml-[2px] w-[18px]" items={[['save', 'Guardar proyecto']]} />
        <Sep />
        <Tools className="ml-[3px] w-[88px]" items={[['newLayout', 'Nueva composición'], ['duplicate', 'Duplicar'], ['manager', 'Administrador'], ['open', 'Abrir plantilla'], ['saveTemplate', 'Guardar plantilla']]} />
        <Sep className="ml-px" />
        <Tools className="ml-[3px] w-[18px]" items={[['addPage', 'Añadir páginas']]} />
        <Sep />
        <Tools className="ml-[2px] w-[106px]" items={[['print', 'Imprimir'], ['exportImage', 'Exportar imagen'], ['exportSvg', 'Exportar SVG'], ['exportPdf', 'Exportar PDF'], ['undo', 'Deshacer'], ['redo', 'Rehacer']]} />
        <Handle className="ml-[5px]" />
        <Tools className="w-[54px]" items={[['atlas', 'Vista previa del atlas', true], ['first', 'Primer objeto'], ['prev', 'Objeto anterior']]} />
        <div className="flex w-[158px] shrink-0">
          <Select id="feature" label="Objeto del atlas" value="4: Soria" bg="bg-white" pad="pl-px" />
        </div>
        <Tools className="w-[71px]" items={[['next', 'Objeto siguiente'], ['last', 'Último objeto'], ['print', 'Imprimir atlas'], ['exportImage', 'Exportar atlas']]} />
        <Caret className="text-[#444]" />
        <Tools className="ml-[3px] w-[18px]" items={[['atlasSettings', 'Configuración del atlas', true]]} />
      </div>

      <div className="flex h-[20px] shrink-0 items-center border-t border-[#d2d2d2] bg-linear-to-b from-[#fafafa] to-[#efefef] pl-[3px]">
        <Handle />
        <Tools className="ml-px w-[88px]" items={[['zoomIn', 'Acercar'], ['zoomOut', 'Alejar'], ['zoomActual', 'Zum al 100%'], ['zoomFull', 'Zum completo'], ['refresh', 'Actualizar']]} />
        <Handle className="ml-1" />
        <Tools className="ml-[3px] w-[140px]" items={[['lock', 'Bloquear'], ['unlock', 'Desbloquear'], ['group', 'Agrupar'], ['ungroup', 'Desagrupar'], ['raise', 'Levantar'], ['align', 'Alinear'], ['distribute', 'Distribuir'], ['resize', 'Redimensionar']]} />
      </div>

      <main className="flex flex-1 border-t border-[#c9c9c9]">
        <div className="flex w-[21px] shrink-0 flex-col items-center bg-linear-to-r from-[#fafafa] to-[#f0f0f0]">
          <span className="mt-[2px] mb-[2px] h-[3px] w-[9px] border-y border-dotted border-[#d0d0d0]" />
          <div className="flex h-[342px] flex-col justify-between">
            {TOOLBOX.map(([n, l, a]) => <ToolButton key={l} name={n} label={l} active={a} />)}
          </div>
        </div>
        <div className="flex min-w-0 flex-1 flex-col pr-1">
          <div className="flex shrink-0">
            <span className="w-[13px] shrink-0 border-l border-[#c9c9c9]" />
            <TopRuler />
          </div>
          <div className="flex flex-1">
            <SideRuler />
            <div className="relative min-w-0 flex-1 overflow-hidden bg-[#d7d7d7]">
              <LayoutPage />
            </div>
          </div>
        </div>
        <aside className="flex w-[302px] shrink-0 flex-col font-['Roboto']">
          <ItemProperties />
          <div className="mt-1 flex h-4 items-end" role="tablist">
            <button type="button" role="tab" aria-selected="false" className="h-[14px] w-[33px] rounded-t-xs border border-b-0 border-[#c0c0c0] bg-[#dedede]">Guías</button>
            <button type="button" role="tab" aria-selected="true" className="h-4 w-[31px] rounded-t-xs border border-b-0 border-[#c0c0c0] bg-[#f4f4f4]">Atlas</button>
          </div>
          <AtlasPanel />
        </aside>
      </main>

      <footer className="flex h-[13px] shrink-0 items-center pl-[3px]">
        <span className="font-['Roboto'] text-[8px]">1 elemento seleccionado</span>
        <span className="ml-auto">x: 383.154 mm</span>
        <span className="ml-[10px]">y: 150.407 mm</span>
        <span className="mr-[27px] ml-[10px]">página: 1</span>
        <div className="flex h-[12px] w-[128px] shrink-0 overflow-hidden">
          <Select id="zoom" label="Nivel de zum" value="49.0%" bg="bg-white" pad="pl-px" />
        </div>
        <input
          type="range"
          aria-label="Zum"
          defaultValue={0}
          className="mr-[2px] ml-1 h-2 w-[51px] appearance-none bg-transparent [&::-webkit-slider-runnable-track]:h-[3px] [&::-webkit-slider-runnable-track]:rounded-full [&::-webkit-slider-runnable-track]:bg-[#c6c6c6] [&::-webkit-slider-thumb]:-mt-[3px] [&::-webkit-slider-thumb]:h-[9px] [&::-webkit-slider-thumb]:w-[9px] [&::-webkit-slider-thumb]:appearance-none [&::-webkit-slider-thumb]:rounded-xs [&::-webkit-slider-thumb]:border [&::-webkit-slider-thumb]:border-[#b0b0b0] [&::-webkit-slider-thumb]:bg-[#fafafa]"
        />
      </footer>
    </div>
  );
}
